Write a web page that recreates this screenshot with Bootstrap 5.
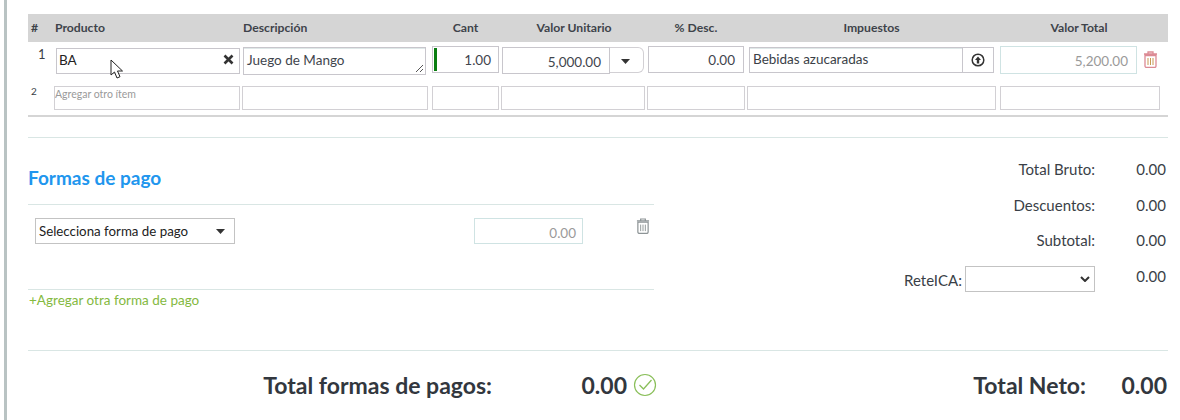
<!DOCTYPE html>
<html lang="es">
<head>
<meta charset="utf-8">
<title>Factura</title>
<link rel="stylesheet" href="https://cdn.jsdelivr.net/npm/bootstrap@5.3.0/dist/css/bootstrap.min.css">
<style>
html,body{height:420px;overflow:hidden}
body{font-family:"Lato","Noto Sans",sans-serif;color:#3a3f47;background:#fff;font-size:14px}
.pagina{margin-left:4px;border-left:3px solid #b9c3c3;height:420px;padding:14px 12px 0 21px}
.rejilla{display:grid;grid-template-columns:26px 188px 190px 69px 146px 100px 253px 168px}
.cabecera{background:#d5d5d5;height:28px;align-items:center;font-size:12.2px;font-weight:700;color:#3e434a}
.cabecera .idx{padding-left:3px}
.cabecera .izq{padding-left:1px}
.cabecera .cen{text-align:center;padding-right:2px}
.cabecera .cen.imp-c{padding-right:4px}
.cabecera .cen.tot-c{padding-right:10px}
.cabecera .cen.vu-c{padding-right:0}
.fila1{height:44px;padding-top:5px}
.fila2{height:27px}
.fila1 .num{padding:0 0 0 10px;font-size:13px;line-height:14px}
.fila2 .num{padding:0 0 0 3px;font-size:10px;line-height:10px}
.caja{border:1px solid #d2d0d4;background:#fff;height:24px;margin-right:2px;font-size:10.5px;color:#9a9a9a;line-height:15px;padding-left:0}
.caja.m4{margin-right:4px}
.fila2 .ult{margin-right:8px}
.campo{border:1px solid #c8c6cc;background:#fff;height:26px;font-size:13.500px;line-height:24px;color:#3f454d;padding:0 5px}
.producto{margin:1px 2px 0 2px;height:26px;color:#222;padding:0 5px 3px 2px;display:flex;justify-content:space-between;align-items:center}
.descr{margin:0 6px 0 1px;height:28px;position:relative;padding-left:3px;box-shadow:inset 0 1px 0 #dfe8e8}
.tirador{position:absolute;right:1px;bottom:1px}
.cant{margin:-1px 2px 0 0;height:27px;text-align:right;padding:0 7px 0 0;position:relative;line-height:27px}
.cant::before{content:"";position:absolute;left:1px;top:1px;bottom:1px;width:3px;background:#0a7d10}
.grupo{display:flex;margin:0 0 0 1px;width:142px}
.grupo .campo:first-child{width:108px;height:27px;text-align:right;padding-right:8px;line-height:28px}
.flecha{width:34px;height:26px;border:1px solid #d2d0d4;border-left:0;border-radius:0 6px 6px 0;display:flex;align-items:center;justify-content:center;padding:3px 2px 0 0}
.pct{margin:-1px 3px 0 1px;height:27px;text-align:right;padding-right:8px;line-height:27px}
.imp{display:flex;margin:0 2px 0 2px;height:26px;width:245px}
.imp .texto{flex:1;border:1px solid #c8c6cc;font-size:13.500px;line-height:22px;padding:0 3px;box-shadow:inset 0 1px 0 #dfe8e8}
.imp .boton{width:31px;border:1px solid #c8c6cc;border-left:0;display:flex;align-items:center;justify-content:center}
.tot-wrap{margin-top:-1px}
.total{width:137px;height:28px;border:1px solid #cfe3e3;text-align:right;font-size:13.500px;line-height:28px;color:#9a9a9a;padding-right:8px}
.bote{margin:5px 0 0 6px}
.linea-gris{height:2px;background:#d5d5d5;margin-top:2px}
.div-claro{height:1px;background:#d9e6e4}
.separa{margin-top:20px}
.medio{display:flex;height:212px}
.pagos{width:626px;padding-top:28px}
.pagos h2{font-size:19px;font-weight:700;color:#2196ee;margin:0;line-height:22px;height:38px;padding-top:1px}
.sel-pago{width:200px;height:26px;border:1px solid #c3c3c3;margin:13px 0 0 7px;font-size:13.300px;color:#222;line-height:24px;padding:0 9px 0 3px;display:flex;justify-content:space-between;align-items:center}
.fila-pago{height:84px;display:flex;align-items:flex-start}
.val-pago{width:109px;height:26px;border:1px solid #cfe3e3;text-align:right;font-size:13.500px;line-height:28px;color:#9a9a9a;padding-right:6px;margin:13px 0 0 auto}
.pap{margin:13px 4px 0 53px}
.agregar{font-size:13.500px;color:#84b93f;line-height:20px;padding-left:1px}
.resumen{margin-left:auto;width:300px;font-size:15px;padding-top:19px}
.res-fila{display:flex;justify-content:flex-end;align-items:flex-start;height:35.500px;line-height:24px}
.res-fila .lbl{text-align:right}
.lbl.rete{padding-top:4px}
.res-fila .val{width:73px;text-align:right;padding-right:2px}
.reteica{width:130px;height:26px;border:1px solid #c3c3c3;margin:2.500px 0 0 3px;display:flex;justify-content:flex-end;align-items:center;padding-right:4px;background:#fff}
.pie{display:flex;align-items:center;height:68px;font-size:23px;font-weight:700;color:#32373e}
.t1{width:464px;text-align:right}
.t2{width:135px;text-align:right}
.cheq{margin-left:6px}
.t3{margin-left:auto}
.t4{width:82px;text-align:right;padding-right:1px}
.cursor{position:absolute;left:103px;top:59px}
</style>
</head>
<body>
<div class="pagina position-relative">
  <div class="rejilla cabecera">
    <div class="idx">#</div><div class="izq">Producto</div><div class="izq">Descripción</div><div class="cen">Cant</div><div class="cen vu-c">Valor Unitario</div><div class="cen">% Desc.</div><div class="cen imp-c">Impuestos</div><div class="cen tot-c">Valor Total</div>
  </div>
  <div class="rejilla fila1">
    <div class="num">1</div>
    <div class="campo producto"><span>BA</span><svg width="11" height="11" viewBox="0 0 11 11"><path d="M1.500 1.500l8 8M9.500 1.500l-8 8" stroke="#333" stroke-width="2.600"/></svg></div>
    <div class="campo descr">Juego de Mango<svg class="tirador" width="9" height="9" viewBox="0 0 9 9"><path d="M1 8l7-7M5 8l3-3" stroke="#555" stroke-width="1"/></svg></div>
    <div class="campo cant">1.00</div>
    <div class="grupo"><div class="campo">5,000.00</div><div class="flecha"><svg width="9" height="5" viewBox="0 0 9 5"><path d="M0 0h9L4.500 5z" fill="#333"/></svg></div></div>
    <div class="campo pct">0.00</div>
    <div class="imp"><div class="texto">Bebidas azucaradas</div><div class="boton"><svg width="14" height="14" viewBox="0 0 14 14"><circle cx="7" cy="7" r="5.800" fill="none" stroke="#333" stroke-width="1.500"/><path d="M7 3.500L10 7H8.200v3.500H5.800V7H4z" fill="#333"/></svg></div></div>
    <div class="d-flex tot-wrap">
      <div class="total">5,200.00</div>
      <svg class="bote" width="15" height="17" viewBox="0 0 15 17"><path d="M2 4.500h11V15a1.500 1.500 0 0 1-1.500 1.500h-8A1.500 1.500 0 0 1 2 15zM1 3h13M5 3V1h5v2" fill="none" stroke="#dc8a94" stroke-width="1.300"/><path d="M5 7v7M7.500 7v7M10 7v7" stroke="#c79a52" stroke-width="1"/></svg>
    </div>
  </div>
  <div class="rejilla fila2">
    <div class="num">2</div>
    <div class="caja">Agregar otro ítem</div><div class="caja m4"></div><div class="caja"></div><div class="caja"></div><div class="caja"></div><div class="caja m4"></div><div class="caja ult"></div>
  </div>
  <div class="linea-gris"></div>
  <div class="div-claro separa"></div>
  <div class="medio">
    <div class="pagos">
      <h2>Formas de pago</h2>
      <div class="div-claro"></div>
      <div class="fila-pago">
        <div class="sel-pago"><span>Selecciona forma de pago</span><svg width="9" height="5" viewBox="0 0 9 5"><path d="M0 0h9L4.500 5z" fill="#333"/></svg></div>
        <div class="val-pago">0.00</div>
        <svg class="pap" width="14" height="16" viewBox="0 0 15 17"><path d="M2 4.500h11V15a1.500 1.500 0 0 1-1.500 1.500h-8A1.500 1.500 0 0 1 2 15zM1 3h13M5 3V1h5v2" fill="none" stroke="#8d9496" stroke-width="1.300"/><path d="M5 7v7M7.500 7v7M10 7v7" stroke="#8d9496" stroke-width="1"/></svg>
      </div>
      <div class="div-claro"></div>
      <div class="agregar">+Agregar otra forma de pago</div>
    </div>
    <div class="resumen">
      <div class="res-fila"><span class="lbl">Total Bruto:</span><span class="val">0.00</span></div>
      <div class="res-fila"><span class="lbl">Descuentos:</span><span class="val">0.00</span></div>
      <div class="res-fila"><span class="lbl">Subtotal:</span><span class="val">0.00</span></div>
      <div class="res-fila"><span class="lbl rete">ReteICA:</span><div class="reteica"><svg width="10" height="6" viewBox="0 0 10 6"><path d="M1 1l4 4 4-4" fill="none" stroke="#333" stroke-width="2"/></svg></div><span class="val">0.00</span></div>
    </div>
  </div>
  <div class="div-claro"></div>
  <div class="pie">
    <div class="t1">Total formas de pagos:</div>
    <div class="t2">0.00</div>
    <svg class="cheq" width="24" height="24" viewBox="0 0 24 24"><circle cx="12" cy="12" r="10.500" fill="none" stroke="#8abf5a" stroke-width="1.200"/><path d="M6.500 12l4 4 8-9" fill="none" stroke="#8abf5a" stroke-width="1.300"/></svg>
    <div class="t3">Total Neto:</div>
    <div class="t4">0.00</div>
  </div>
  <svg class="cursor" width="14" height="21" viewBox="0 0 14 21"><path d="M1 1v15l3.500-3 2.500 6 3-1.300-2.500-5.700H12.500z" fill="#fff" stroke="#222" stroke-width="1"/></svg>
</div>
<script src="https://cdn.jsdelivr.net/npm/bootstrap@5.3.0/dist/js/bootstrap.bundle.min.js"></script>
</body>
</html>
